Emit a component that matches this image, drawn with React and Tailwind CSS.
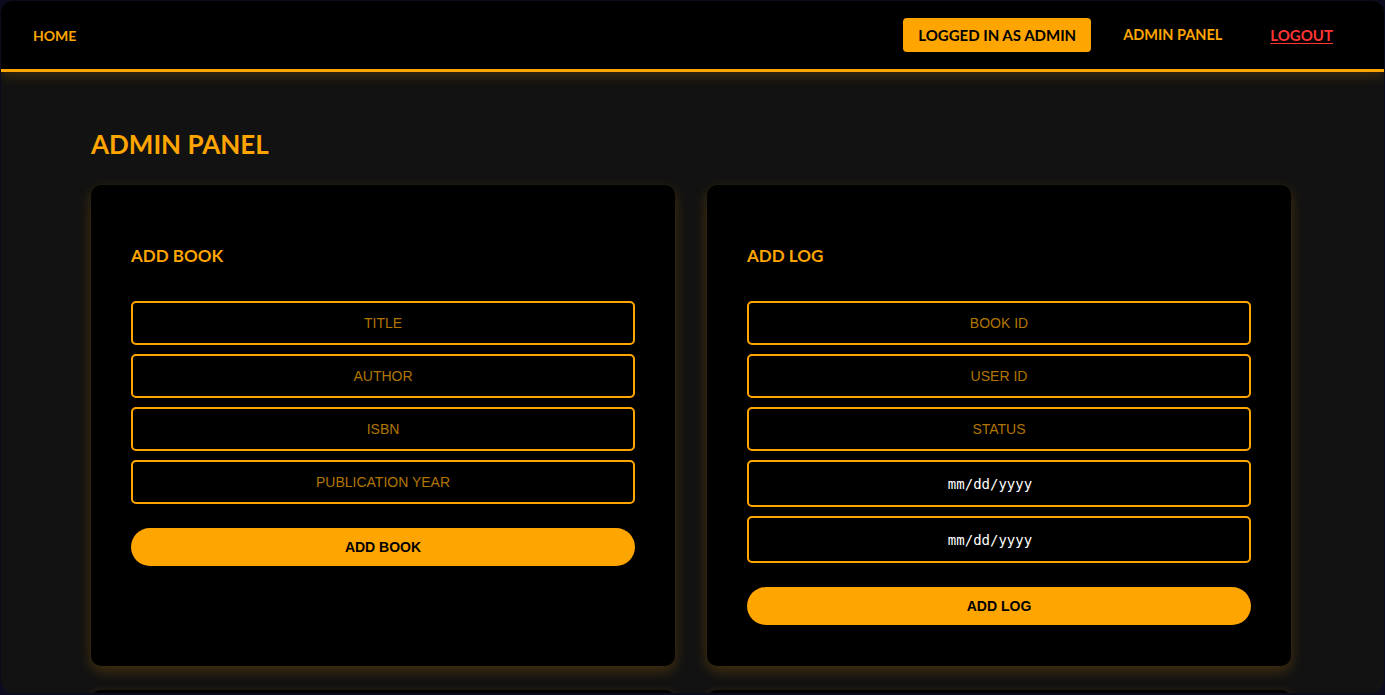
import { useState } from 'react';

const head = { fontFamily: '"Lato", "Open Sans", sans-serif' };
const body = { fontFamily: '"Liberation Sans", Arial, sans-serif' };
const mono = { fontFamily: '"DejaVu Sans Mono", "Liberation Mono", monospace' };

function Field({ placeholder, name, value, onChange }) {
  return (
    <input
      name={name}
      value={value}
      onChange={onChange}
      placeholder={placeholder}
      style={body}
      className="w-full h-[44px] rounded-[5px] border-2 border-[#ffa500] bg-black text-center text-sm text-[#ffa500] placeholder:text-[#b07500] outline-none"
    />
  );
}

function DateField({ name, value, onChange }) {
  return (
    <input
      name={name}
      value={value}
      onChange={onChange}
      placeholder="mm/dd/yyyy"
      style={mono}
      className="w-full h-[47px] rounded-[5px] border-2 border-[#ffa500] bg-black pr-[18px] text-center text-sm text-white placeholder:text-white outline-none"
    />
  );
}

function Card({ title, children }) {
  return (
    <div className="bg-black rounded-[10px] px-10 pt-[62px] pb-[41px] shadow-[0_5px_14px_rgba(255,165,0,0.22)]">
      {title && (
        <h3 style={head} className="text-[17px] font-bold text-[#ffa500] mb-[37px] leading-none">
          {title}
        </h3>
      )}
      {children}
    </div>
  );
}

function SubmitButton({ children }) {
  return (
    <button
      type="submit"
      style={body}
      className="w-full h-[38px] rounded-full bg-[#ffa500] text-black text-sm font-bold cursor-pointer"
    >
      {children}
    </button>
  );
}

export default function App() {
  const [book, setBook] = useState({ title: '', author: '', isbn: '', year: '' });
  const [log, setLog] = useState({ bookId: '', userId: '', status: '', start: '', end: '' });

  const onBook = (e) => setBook({ ...book, [e.target.name]: e.target.value });
  const onLog = (e) => setLog({ ...log, [e.target.name]: e.target.value });

  return (
    <div className="min-h-screen bg-[#0b0b20] p-px">
      <div className="h-[692px] overflow-hidden rounded-[12px] bg-[#121212]">
        <nav className="h-[71px] bg-black border-b-[3px] border-[#ffa500] flex items-center justify-between pl-[32px] pr-[51px] shadow-[0_4px_12px_rgba(255,165,0,0.18)] relative">
          <a href="#" style={head} className="text-[14px] font-bold text-[#ffa500]">HOME</a>
          <div className="flex items-center">
            <span style={head} className="bg-[#ffa500] text-black text-[15px] font-bold rounded-[4px] h-[34px] px-[15px] flex items-center">
              LOGGED IN AS ADMIN
            </span>
            <a href="#" style={head} className="ml-[32px] text-[14.5px] font-bold text-[#ffa500]">ADMIN PANEL</a>
            <a href="#" style={head} className="ml-[48px] text-[15px] font-bold text-[#ff3535] underline underline-offset-2">LOGOUT</a>
          </div>
        </nav>

        <main className="ml-[90px] w-[1200px] pt-[59px]">
          <h1 style={head} className="text-[26px] font-bold text-[#ffa500] leading-none mb-[28px]">ADMIN PANEL</h1>

          <div className="grid grid-cols-2 gap-x-8 gap-y-6">
            <Card title="ADD BOOK">
              <form onSubmit={(e) => e.preventDefault()}>
                <div className="flex flex-col gap-[9px]">
                  <Field name="title" placeholder="TITLE" value={book.title} onChange={onBook} />
                  <Field name="author" placeholder="AUTHOR" value={book.author} onChange={onBook} />
                  <Field name="isbn" placeholder="ISBN" value={book.isbn} onChange={onBook} />
                  <Field name="year" placeholder="PUBLICATION YEAR" value={book.year} onChange={onBook} />
                </div>
                <div className="mt-[24px]">
                  <SubmitButton>ADD BOOK</SubmitButton>
                </div>
              </form>
            </Card>

            <Card title="ADD LOG">
              <form onSubmit={(e) => e.preventDefault()}>
                <div className="flex flex-col gap-[9px]">
                  <Field name="bookId" placeholder="BOOK ID" value={log.bookId} onChange={onLog} />
                  <Field name="userId" placeholder="USER ID" value={log.userId} onChange={onLog} />
                  <Field name="status" placeholder="STATUS" value={log.status} onChange={onLog} />
                  <DateField name="start" value={log.start} onChange={onLog} />
                  <DateField name="end" value={log.end} onChange={onLog} />
                </div>
                <div className="mt-[24px]">
                  <SubmitButton>ADD LOG</SubmitButton>
                </div>
              </form>
            </Card>

            {/* next row, only its top edge shows */}
            <Card>
              <div className="h-[200px]" />
            </Card>
            <Card>
              <div className="h-[200px]" />
            </Card>
          </div>
        </main>
      </div>
    </div>
  );
}
